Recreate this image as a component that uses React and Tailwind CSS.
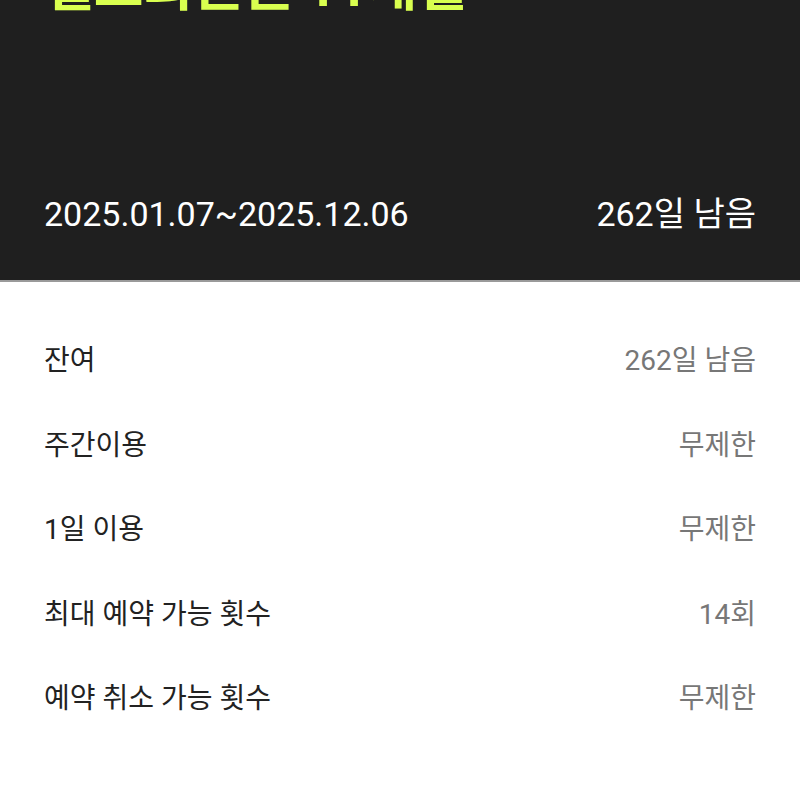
import React from "react";

const rows = [
  ["잔여", "262일 남음"],
  ["주간이용", "무제한"],
  ["1일 이용", "무제한"],
  ["최대 예약 가능 횟수", "14회"],
  ["예약 취소 가능 횟수", "무제한"],
];

export default function App() {
  return (
    <div
      className="w-[800px] h-[800px] overflow-hidden bg-white"
      style={{ fontFamily: 'Roboto, "Noto Sans CJK KR", sans-serif' }}
    >
      <div className="h-[280px] bg-[#1f1f1f] px-[44px] flex flex-col overflow-hidden">
        <div className="-mt-[48px] text-[54px] leading-[72px] font-bold text-[#d9ff4f] whitespace-nowrap">
          헬스회원권 11개월
        </div>
        <div className="mt-[170px] flex items-center justify-between text-[34px] leading-[40px] text-white">
          <span>2025.01.07~2025.12.06</span>
          <span>262일 남음</span>
        </div>
      </div>
      <div className="h-[2px] bg-[#9a9a9a]" />
      <div className="px-[44px] pt-[37px] flex flex-col">
        {rows.map(([l, v]) => (
          <div key={l} className="h-[84.5px] flex items-center justify-between text-[28px]">
            <span className="text-[#222]">{l}</span>
            <span className="text-[#777]">{v}</span>
          </div>
        ))}
      </div>
    </div>
  );
}
